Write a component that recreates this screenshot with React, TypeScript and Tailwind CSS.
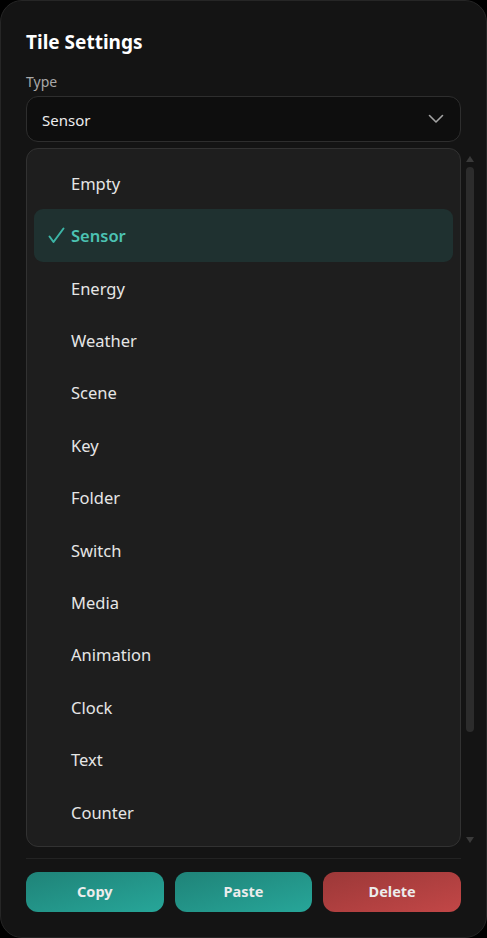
import React, { useState } from 'react';

const TILE_TYPES = [
  'Empty',
  'Sensor',
  'Energy',
  'Weather',
  'Scene',
  'Key',
  'Folder',
  'Switch',
  'Media',
  'Animation',
  'Clock',
  'Text',
  'Counter',
];

const ChevronDown: React.FC = () => (
  <svg width="16" height="10" viewBox="0 0 16 10" fill="none">
    <path d="M1.5 1.5L8 8L14.5 1.5" stroke="#a3a3a3" strokeWidth="1.6" strokeLinecap="round" strokeLinejoin="round" />
  </svg>
);

const CheckMark: React.FC = () => (
  <svg width="17" height="17" viewBox="0 0 17 17" fill="none">
    <path d="M1.5 9.5L5.5 15L15.5 1.5" stroke="#3cb5a6" strokeWidth="2" strokeLinecap="round" strokeLinejoin="round" />
  </svg>
);

// fake native scrollbar next to the option list
const ScrollBar: React.FC = () => (
  <div className="flex w-[10px] flex-col items-center pt-[8px] pb-[4px]">
    <div className="h-0 w-0 border-x-[4px] border-b-[6px] border-x-transparent border-b-[#3a3a3a]" />
    <div className="mt-[5px] h-[565px] w-[8px] rounded-full bg-[#2c2c2c]" />
    <div className="flex-1" />
    <div className="h-0 w-0 border-x-[4px] border-t-[6px] border-x-transparent border-t-[#3a3a3a]" />
  </div>
);

const App: React.FC = () => {
  const [selected, setSelected] = useState('Sensor');

  return (
    <div
      className="h-[938px] w-[487px] bg-black"
      style={{ fontFamily: '"Noto Sans", "Open Sans", sans-serif' }}
    >
      <div className="flex h-full flex-col rounded-[22px] border border-[#262626] bg-[#141414] px-[25px] pt-[26px]">
        <h2 className="text-[19px] font-bold leading-[30px] text-white">Tile Settings</h2>

        <label className="mt-[15px] text-[14px] leading-[20px] text-[#a8a8a8]">Type</label>

        <button className="mt-[4px] flex h-[46px] w-full items-center justify-between rounded-[12px] border border-[#2e2e2e] bg-[#0e0e0e] pl-[15px] pr-[16px] text-left">
          <span className="pt-[3px] text-[15px] text-[#ededed]">{selected}</span>
          <ChevronDown />
        </button>

        <div className="mt-[6px] -mr-[14px] flex gap-[4px]">
          <ul className="flex-1 rounded-[12px] border border-[#323232] bg-[#1e1e1e] px-[7px] py-[8px]">
            {TILE_TYPES.map((type) => {
              const active = type === selected;
              return (
                <li
                  key={type}
                  onClick={() => setSelected(type)}
                  className={`flex h-[52.4px] cursor-pointer items-center rounded-[9px] ${
                    active ? 'bg-[#1f3130]' : ''
                  }`}
                >
                  <span className="flex w-[37px] justify-end pr-[6px]">{active && <CheckMark />}</span>
                  <span
                    className={`pt-[2px] text-[16.5px] ${active ? 'font-semibold text-[#4cc3b3]' : 'text-[#e6e6e6]'}`}
                  >
                    {type}
                  </span>
                </li>
              );
            })}
          </ul>
          <ScrollBar />
        </div>

        <div className="mt-[11px] h-px w-full bg-[#232323]" />

        <div className="mt-[13px] grid grid-cols-3 gap-[11px]">
          <button className="h-[40px] rounded-[12px] bg-gradient-to-br from-[#1f8378] to-[#27a699] text-[14.5px] font-bold text-[#ececec]">
            Copy
          </button>
          <button className="h-[40px] rounded-[12px] bg-gradient-to-br from-[#1f8378] to-[#27a699] text-[14.5px] font-bold text-[#ececec]">
            Paste
          </button>
          <button className="h-[40px] rounded-[12px] bg-gradient-to-br from-[#9c3838] to-[#c24747] text-[14.5px] font-bold text-[#ececec]">
            Delete
          </button>
        </div>
      </div>
    </div>
  );
};

export default App;
